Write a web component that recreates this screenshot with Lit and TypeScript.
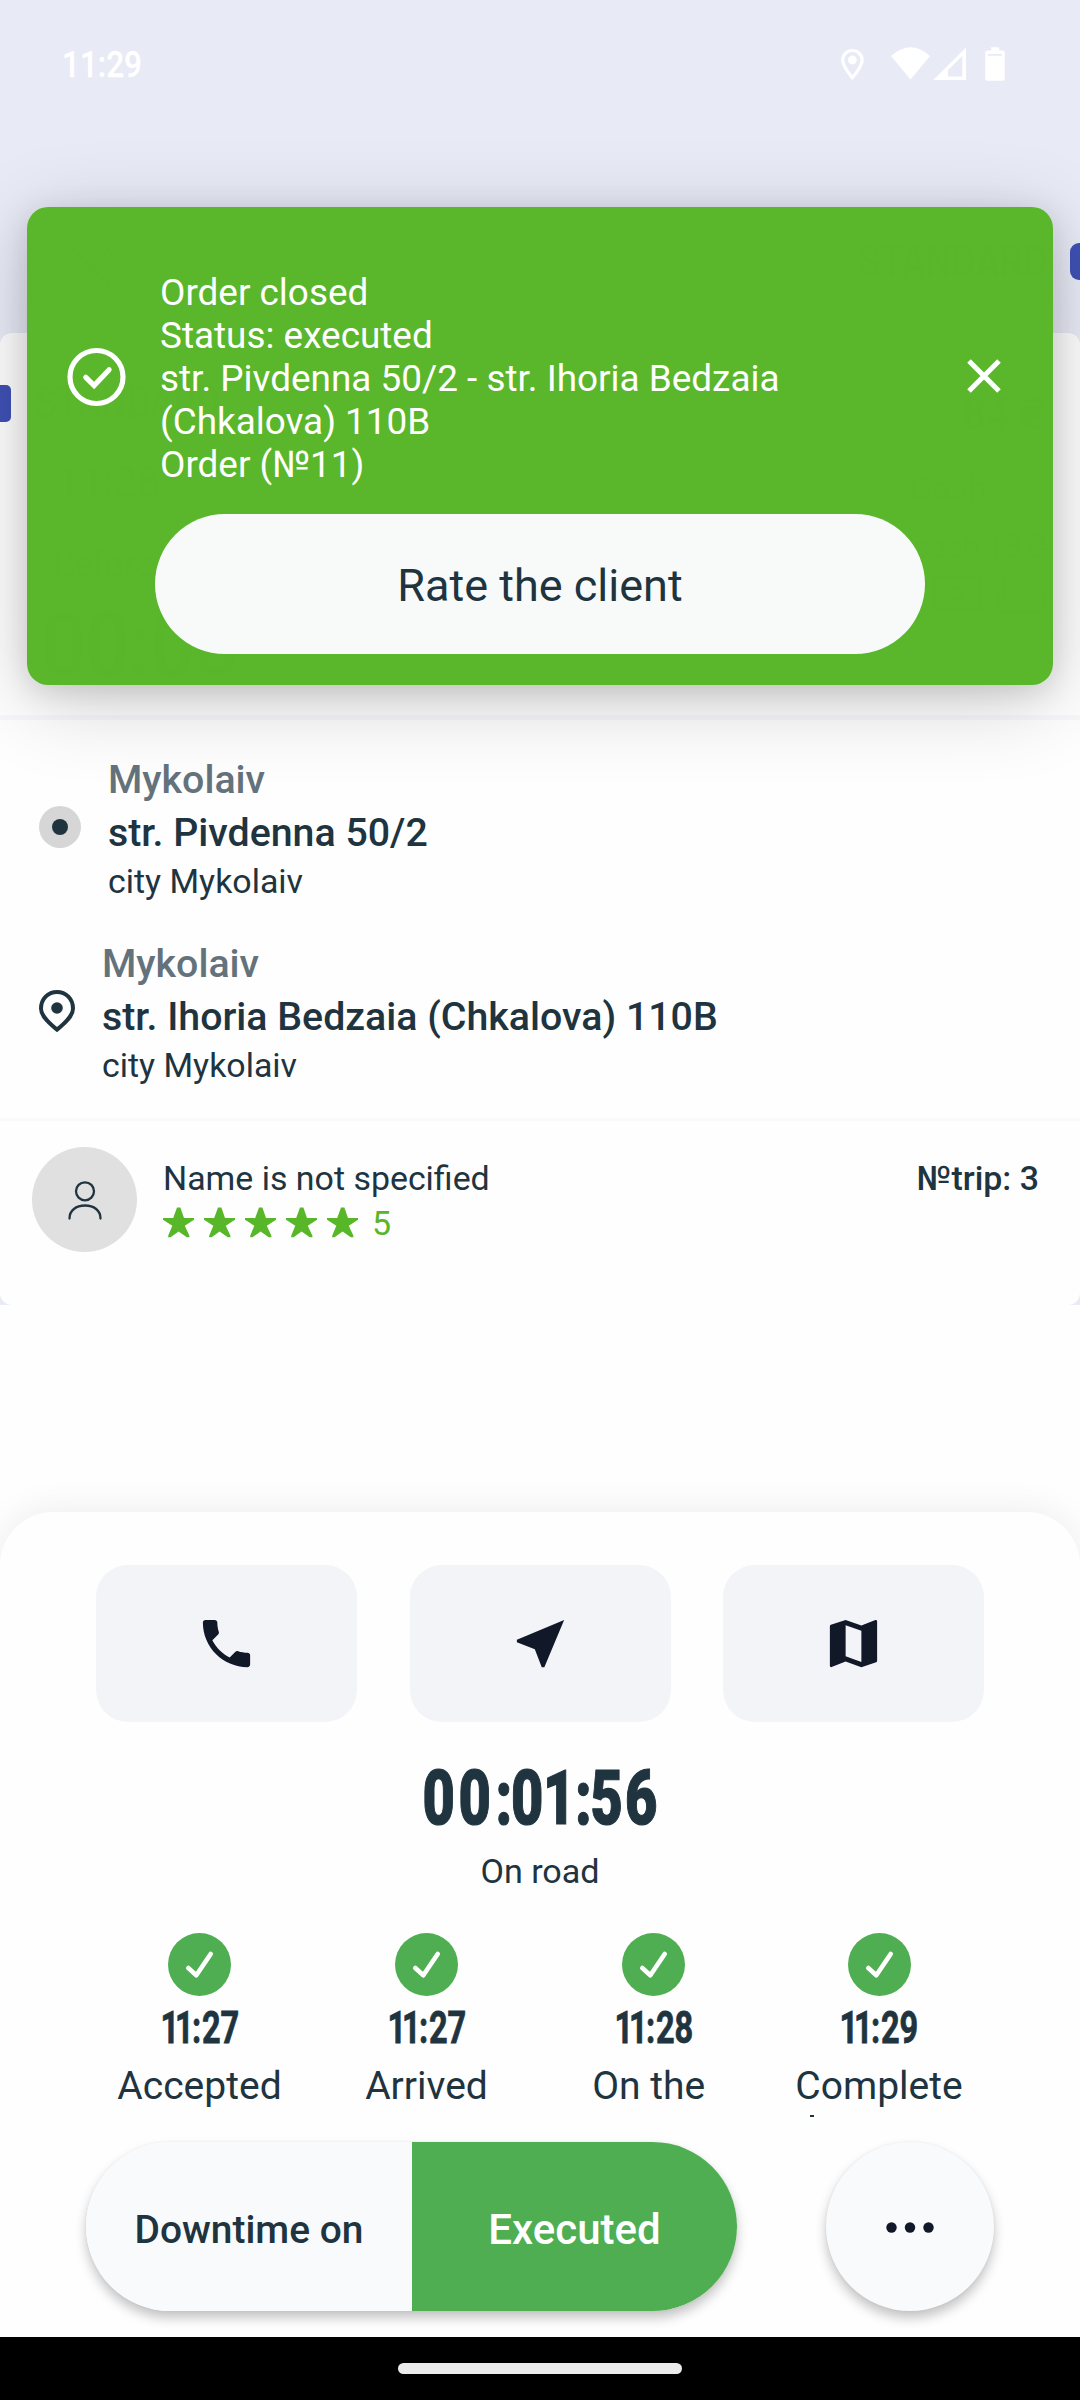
import { LitElement, html, svg, css } from "lit";
import { customElement, property } from "lit/decorators.js";

const INK = "#203440";

@customElement("status-bar")
class StatusBar extends LitElement {
  static styles = css`
    :host {
      display: flex;
      height: 130px;
      box-sizing: border-box;
      padding: 43px 75px 0 62px;
      justify-content: space-between;
      align-items: flex-start;
      color: #fff;
      font: 500 35px/42px Roboto, sans-serif;
    }
    svg { display: block; overflow: visible; }
  `;
  render() {
    return html`
      <svg width="82" height="46" viewBox="0 0 82 46">
        <text x="0" y="34" fill="#fff" stroke="#fff" stroke-width="0.300" font-size="36" font-weight="500" textLength="80" lengthAdjust="spacingAndGlyphs">11:29</text>
      </svg>
      <svg width="170" height="42" viewBox="0 0 170 42" fill="#fff">
        <path d="M17.4 7.5c-5.4 0-9.7 4.200-9.700 9.600 0 6.800 9.700 17.500 9.700 17.500s9.700-10.700 9.700-17.500c0-5.400-4.300-9.600-9.700-9.600z" fill="none" stroke="#fff" stroke-width="3.200" />
        <circle cx="17.400" cy="17" r="4.400" />
        <path d="M56 13Q75.500-4.500 95 13L75.500 36.500z" />
        <path fill-rule="evenodd" d="M98.300 37 131 4.500V37zM113 33.500h14.300V13L113 27z" />
        <path fill-rule="evenodd" d="M156.200 4.200h8v3.300h3.600q2 0 2 2v26.300q0 2-2 2h-15.600q-2 0-2-2V9.500q0-2 2-2h4zM153 11v1.800h14V11z" />
      </svg>
    `;
  }
}

@customElement("route-stop")
class RouteStop extends LitElement {
  @property() kind = "from";
  @property() district = "";
  @property() street = "";
  @property() city = "";
  static styles = css`
    :host { display: flex; align-items: center; padding-left: 39px; height: 145px; color: #203440; font-family: Roboto, sans-serif; }
    svg { display: block; flex: none; margin-top: -3px; }
    .lines { display: flex; flex-direction: column; white-space: nowrap; margin: 1px 0 0 27px; }
    .district { font-size: 39.300px; line-height: 46px; font-weight: 500; color: #64727c; }
    .street { font-size: 39.300px; line-height: 46px; font-weight: 500; margin-top: 7px; }
    .city { font-size: 33.900px; line-height: 40px; margin-top: 6px; }
  `;
  render() {
    return html`
      ${this.kind === "from"
        ? html`<svg width="42" height="42" viewBox="0 0 42 42"><circle cx="21" cy="21" r="21" fill="#d6d6d6" /><circle cx="21" cy="21" r="8" fill=${INK} /></svg>`
        : html`<svg width="36" height="42" viewBox="0 0 36 42">
            <path d="M18 2C9 2 2 9 2 18.500 2 24 5.500 29.500 18 39.600 30.500 29.500 34 24 34 18.500 34 9 27 2 18 2z" fill="none" stroke=${INK} stroke-width="4" />
            <circle cx="18" cy="18" r="5.800" fill=${INK} />
          </svg>`}
      <div class="lines">
        <div class="district">${this.district}</div>
        <div class="street">${this.street}</div>
        <div class="city">${this.city}</div>
      </div>
    `;
  }
}

@customElement("order-toast")
class OrderToast extends LitElement {
  static styles = css`
    :host {
      display: block;
      box-sizing: border-box;
      border-radius: 21px;
      background: rgba(89, 182, 42, 0.995);
      box-shadow: 0 16px 84px rgba(0, 0, 0, 0.19), 0 6px 30px rgba(0, 0, 0, 0.13);
      font-family: Roboto, sans-serif;
    }
    .top { display: flex; align-items: center; height: 307px; padding: 0 51px 0 40px; box-sizing: border-box; }
    .message { flex: 1; margin: 35px 0 0 34px; color: #fff; font-size: 36.900px; line-height: 43px; }
    svg { display: block; flex: none; }
    .ok { margin-top: 32px; }
    .close { margin-top: 31px; }
    .rate {
      display: flex;
      align-items: center;
      justify-content: center;
      width: 770px;
      height: 140px;
      margin: 0 auto;
      border-radius: 70px;
      background: #f8faf9;
      color: #203440;
      font-size: 45px;
      line-height: 52px;
      padding-top: 4px;
      box-sizing: border-box;
    }
  `;
  render() {
    return html`
      <div class="top">
        <svg class="ok" width="59" height="60" viewBox="0 0 59 60" fill="none" stroke="#fff">
          <circle cx="29.500" cy="30" r="26.500" stroke-width="5.200" />
          <path d="M18.800 30.300l8.300 8.200 15-15.800" stroke-width="5.200" stroke-linecap="round" />
        </svg>
        <div class="message">
          Order closed<br />Status: executed<br />str. Pivdenna 50/2 - str. Ihoria Bedzaia<br />(Chkalova) 110B<br />Order (№11)
        </div>
        <svg class="close" width="36" height="36" viewBox="0 0 36 36">
          <path d="M3 3l30 30M33 3L3 33" stroke="#fff" stroke-width="5" />
        </svg>
      </div>
      <div class="rate">Rate the client</div>
    `;
  }
}

// Condensed numerals: glyph positions are given in drawn pixels and divided by the horizontal squeeze.
const squeezed = (text: string, xs: number[], y: number, size: number, k: number, weight: number, extra: number) => svg`
  <text transform="scale(${k} 1)" x=${xs.map((v) => (v / k).toFixed(2)).join(" ")} y=${y}
    font-family="Roboto, sans-serif" font-size=${size} font-weight=${weight} fill=${INK}
    stroke=${INK} stroke-width=${extra}>${text}</text>`;

@customElement("trip-step")
class TripStep extends LitElement {
  @property() time = "";
  @property() label = "";
  @property({ type: Boolean }) cut = false;
  static styles = css`
    :host { display: flex; flex-direction: column; align-items: center; height: 184px; overflow: hidden; color: #203440; font-family: Roboto, sans-serif; }
    svg { display: block; overflow: visible; }
    .time { margin-top: 9px; }
    .label { margin-top: 13px; font-size: 39px; line-height: 46px; white-space: pre; }
    .tip { width: 4px; height: 2px; margin: 6px 134px 0 0; background: #203440; }
  `;
  render() {
    return html`
      <svg width="63" height="63" viewBox="0 0 63 63">
        <circle cx="31.500" cy="31.500" r="31.500" fill="#4fae52" />
        <path d="M20.300 35l8 7.200L42.700 21" fill="none" stroke="#fff" stroke-width="4.600" stroke-linecap="round" stroke-linejoin="round" />
      </svg>
      <svg class="time" width="80" height="45" viewBox="0 -2 80 45">
        ${squeezed(this.time, [0.5, 15, 32, 42, 60.5], 35.5, 44.5, 0.73, 700, 0.8)}
      </svg>
      <div class="label">${this.label}</div>
      ${this.cut ? html`<div class="tip"></div>` : null}
    `;
  }
}

@customElement("app-root")
class AppRoot extends LitElement {
  static styles = css`
    :host { display: block; position: relative; width: 1080px; height: 2400px; overflow: hidden; background: #fefefe; color: #203440; font-family: Roboto, sans-serif; }
    svg { display: block; flex: none; }
    .page { background: #e8eaf6; height: 1305px; }
    .header { height: 203px; }
    .card { height: 972px; background: #fefefe; border-radius: 12px; box-sizing: border-box; }
    .summary { height: 382px; }
    .route { border-top: 5px solid #f7f8fb; padding-top: 36px; height: 362px; display: flex; flex-direction: column; gap: 39px; }
    .client { display: flex; align-items: flex-start; border-top: 3px solid #f8f9fc; padding: 26px 41px 0 32px; }
    .avatar { width: 105px; height: 105px; border-radius: 50%; background: #e0e0e0; display: flex; align-items: center; justify-content: center; }
    .person { margin: 9px 0 0 26px; padding-top: 3px; flex: 1; font-size: 33.900px; line-height: 40px; }
    .rating { display: flex; align-items: center; height: 40px; margin-top: 5px; color: #58b629; }
    .rating svg { margin-top: -3px; }
    .score { margin-left: 13px; }
    .trip { padding-top: 12px; font-size: 33.900px; line-height: 40px; font-weight: 500; }
    order-toast { position: absolute; left: 27px; top: 207px; width: 1026px; height: 478px; }
    .sheet { margin-top: 207px; height: 825px; border-radius: 53px 53px 0 0; background: #fefefe; box-shadow: 0 -2px 36px rgba(0, 0, 0, 0.07); box-sizing: border-box; padding-top: 53px; }
    .actions { display: grid; grid-template-columns: repeat(3, 261px); gap: 52.5px; padding-left: 96px; }
    .action { height: 157px; border-radius: 32px; background: #f2f4f8; display: flex; align-items: center; justify-content: center; }
    .timer { margin: 33px auto 0; overflow: visible; }
    .state { margin-top: 12px; text-align: center; font-size: 34.100px; line-height: 40px; }
    .steps { display: grid; grid-template-columns: 227px 227px 227px 224px; padding-left: 86px; margin-top: 42px; }
    .bottom { display: flex; justify-content: space-between; padding: 0 86px; margin-top: 25px; }
    .pill { display: flex; width: 651px; height: 169px; border-radius: 85px; overflow: hidden; background: #f8fafc; }
    .pillwrap { border-radius: 85px; box-shadow: 0 7px 12px rgba(0, 0, 0, 0.23), 0 0 3px rgba(0, 0, 0, 0.06); }
    .downtime { width: 326px; display: flex; align-items: center; justify-content: center; font-size: 38.900px; font-weight: 500; padding-top: 6px; box-sizing: border-box; }
    .executed { flex: 1; background: #4fae52; color: #fff; display: flex; align-items: center; justify-content: center; font-size: 42px; font-weight: 500; padding-top: 6px; }
    .more { width: 168px; height: 169px; border-radius: 50%; background: #f8fafc; box-shadow: 0 7px 12px rgba(0, 0, 0, 0.23), 0 0 3px rgba(0, 0, 0, 0.06); display: flex; align-items: center; justify-content: center; }
    .nav { height: 63px; background: #000; display: flex; justify-content: center; padding-top: 26px; box-sizing: border-box; }
    .handle { width: 284px; height: 11px; border-radius: 6px; background: #ebebeb; }
  `;
  render() {
    return html`
      <div class="page">
        <status-bar></status-bar>
        <svg class="header" width="1080" height="203" viewBox="0 130 1080 203">
          <path d="M73 248l37 38M110 248L73 286" stroke=${INK} stroke-width="3" />
          <text x="858" y="277" font-size="46" font-weight="500" fill=${INK} textLength="189" lengthAdjust="spacingAndGlyphs">STANDARD</text>
          <rect x="1070" y="243" width="30" height="37" rx="9" fill="#3f51b5" />
        </svg>
        <div class="card">
          <svg class="summary" width="1080" height="382" viewBox="0 333 1080 382" fill=${INK}>
            <rect x="-20" y="385" width="31" height="37" rx="5" fill="#3f51b5" />
            <text x="35" y="418" font-size="46" font-weight="500" textLength="185" lengthAdjust="spacingAndGlyphs">STANDARD</text>
            <text x="56" y="496" font-size="42" textLength="104">11:28</text>
            <text x="53" y="577" font-size="36" textLength="100">Before</text>
            <text x="42" y="677" font-size="92" font-weight="700" textLength="196" lengthAdjust="spacingAndGlyphs">00:00</text>
            <text x="962" y="430" font-size="46" font-weight="700" textLength="85" lengthAdjust="spacingAndGlyphs">84 ₴</text>
            <text x="910" y="500" font-size="34">Cash</text>
            <text x="912" y="558" font-size="34" textLength="135">cash 13 ₴</text>
            <g fill="none" stroke=${INK} stroke-width="3">
              <rect x="934" y="577" width="47" height="33" rx="4" /><circle cx="957" cy="593" r="6" />
              <path d="M998 590v22h47v-22M1004 573v24l8-6M1046 575l-22 24" />
            </g>
          </svg>
          <div class="route">
            <route-stop kind="from" district="Mykolaiv" street="str. Pivdenna 50/2" city="city Mykolaiv"></route-stop>
            <route-stop kind="to" district="Mykolaiv" street="str. Ihoria Bedzaia (Chkalova) 110B" city="city Mykolaiv"></route-stop>
          </div>
          <div class="client">
            <div class="avatar">
              <svg width="36" height="42" viewBox="0 0 36 42" fill="none" stroke=${INK} stroke-width="2.300">
                <circle cx="18" cy="12.300" r="9" />
                <path d="M2.500 39.500c0-8 6.500-13 15.500-13s15.500 5 15.500 13" stroke-linecap="round" />
              </svg>
            </div>
            <div class="person">
              <div>Name is not specified</div>
              <div class="rating">
                <svg width="196" height="31" viewBox="0 0 196 31" fill="#58b629">
                  ${[0, 41, 82, 123, 164].map(
                    (x) => svg`<path transform="translate(${x} 0)" d="M14 0.500h3.400l3.600 10.500H31v1.800L21.800 18.800l4.600 9.900v1.500h-2.600l-8.200-5.600-8 5.600H5.200v-1.500L9.300 18.800 0 12.800V11h10.200z" />`
                  )}
                </svg>
                <div class="score">5</div>
              </div>
            </div>
            <div class="trip">№trip: 3</div>
          </div>
        </div>
      </div>
      <div class="sheet">
        <div class="actions">
          <div class="action">
            <svg width="63" height="63" viewBox="0 0 24 24" fill="#111827"><path d="M6.620 10.790c1.440 2.830 3.760 5.140 6.590 6.590l2.200-2.200c.270-.27.670-.36 1.020-.24 1.120.370 2.330.570 3.570.570.550 0 1 .450 1 1V20c0 .550-.45 1-1 1-9.390 0-17-7.610-17-17 0-.55.450-1 1-1h3.500c.550 0 1 .450 1 1 0 1.250.200 2.450.570 3.570.110.350.030.740-.25 1.020l-2.200 2.200z" /></svg>
          </div>
          <div class="action">
            <svg width="63" height="63" viewBox="0 0 24 24" fill="#111827"><path d="M21 3L3 10.530v.98l6.840 2.650L12.480 21h.980L21 3z" /></svg>
          </div>
          <div class="action">
            <svg width="63" height="63" viewBox="0 0 24 24" fill="#111827"><path d="M20.500 3l-.16.030L15 5.100 9 3 3.360 4.900c-.21.070-.36.250-.36.480V20.500c0 .280.220.5.500.5l.16-.03L9 18.900l6 2.100 5.640-1.900c.210-.07.360-.25.360-.48V3.500c0-.28-.22-.5-.5-.5zM15 19l-6-2.110V5l6 2.110V19z" /></svg>
          </div>
        </div>
        <svg class="timer" width="240" height="84" viewBox="420 1755 240 84">
          ${squeezed("00:01:56", [422.5, 458.5, 495.5, 511, 543, 575, 590.5, 625], 1823.5, 76.5, 0.73, 900, 1.2)}
        </svg>
        <div class="state">On road</div>
        <div class="steps">
          <trip-step time="11:27" label="Accepted"></trip-step>
          <trip-step time="11:27" label="Arrived"></trip-step>
          <trip-step time="11:28" label="On the "></trip-step>
          <trip-step time="11:29" label="Complete" cut></trip-step>
        </div>
        <div class="bottom">
          <div class="pillwrap">
            <div class="pill">
              <div class="downtime">Downtime on</div>
              <div class="executed">Executed</div>
            </div>
          </div>
          <div class="more">
            <svg width="50" height="12" viewBox="0 0 50 12" fill="#111827"><circle cx="6.500" cy="6.500" r="5.200" /><circle cx="25" cy="6.500" r="5.200" /><circle cx="43.500" cy="6.500" r="5.200" /></svg>
          </div>
        </div>
      </div>
      <div class="nav"><div class="handle"></div></div>
      <order-toast></order-toast>
    `;
  }
}
